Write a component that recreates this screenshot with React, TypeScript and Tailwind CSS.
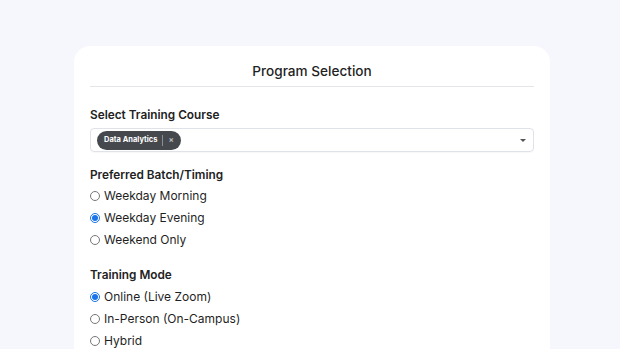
import React from "react";

function Radio({ label, checked }: { label: string; checked?: boolean }) {
  return (
    <label className="flex h-[22px] items-center gap-[4px] text-[12px] leading-[22px] text-[#1f1f1f]">
      <input
        type="radio"
        readOnly
        checked={!!checked}
        className="m-0 h-[10px] w-[10px] accent-[#1a73e8]"
      />
      <span>{label}</span>
    </label>
  );
}

export default function App() {
  return (
    <div
      className="h-[349px] overflow-hidden bg-[#f5f7fc] pt-[46px]"
      style={{ fontFamily: "Inter, 'Noto Sans', sans-serif" }}
    >
      <div className="ml-[74px] w-[476px] rounded-t-2xl bg-white px-4 pb-4 pt-[15px]">
        <h2 className="border-b border-[#e3e5e8] pb-[5px] text-center text-[13.6px] font-medium leading-[20px] text-[#1f1f1f]">
          Program Selection
        </h2>

        <p className="mt-[20px] text-[11.8px] font-semibold leading-[16px] text-[#222]">
          Select Training Course
        </p>
        <div className="mt-[5px] flex h-[24px] items-center rounded border border-[#dfe2e8] pl-[6px] pr-[7px] shadow-[0_1px_1px_rgba(0,0,0,0.03)]">
          <span className="flex h-[19px] items-center rounded-full bg-[#45494e] pl-[7px] pr-[7px] text-[7.5px] font-bold text-white">
            Data Analytics
            <span className="mx-[5px] h-[11px] w-px bg-[#8a8d91]" />
            <span className="text-[8px] text-[#b8babd]">×</span>
          </span>
          <span className="ml-auto h-0 w-0 border-x-[3px] border-t-[3px] border-x-transparent border-t-[#555]" />
        </div>

        <p className="mt-[15px] text-[11.8px] font-semibold leading-[16px] text-[#222]">
          Preferred Batch/Timing
        </p>
        <div className="mt-[2px] flex flex-col">
          <Radio label="Weekday Morning" />
          <Radio label="Weekday Evening" checked />
          <Radio label="Weekend Only" />
        </div>

        <p className="mt-[16px] text-[11.8px] font-semibold leading-[16px] text-[#222]">
          Training Mode
        </p>
        <div className="mt-[3px] flex flex-col">
          <Radio label="Online (Live Zoom)" checked />
          <Radio label="In-Person (On-Campus)" />
          <Radio label="Hybrid" />
        </div>
      </div>
    </div>
  );
}
